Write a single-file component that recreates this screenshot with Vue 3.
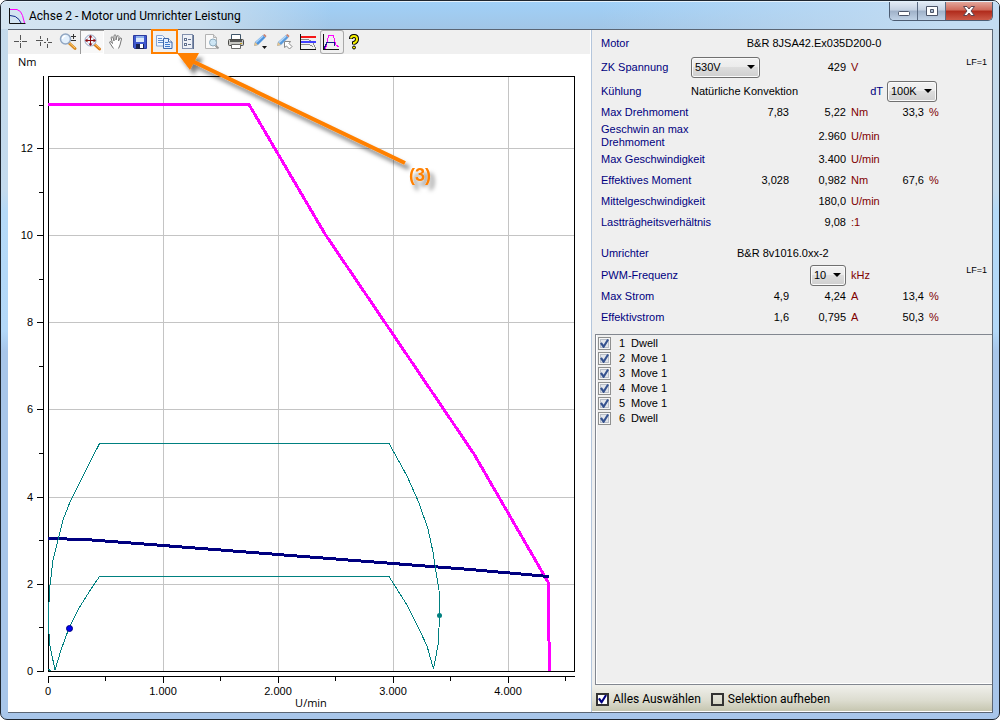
<script setup>
import { ref } from 'vue'

const voltage = ref('530V')
const delta = ref('100K')
const pwm = ref('10')

const motorRows = [
  { label: 'Max Drehmoment', limit: '7,83', value: '5,22', unit: 'Nm', pct: '33,3' },
  { label: 'Geschwin an max Drehmoment', value: '2.960', unit: 'U/min', tall: true },
  { label: 'Max Geschwindigkeit', value: '3.400', unit: 'U/min' },
  { label: 'Effektives Moment', limit: '3,028', value: '0,982', unit: 'Nm', pct: '67,6' },
  { label: 'Mittelgeschwindigkeit', value: '180,0', unit: 'U/min' },
  { label: 'Lastträgheitsverhältnis', value: '9,08', unit: ':1' },
]
const driveRows = [
  { label: 'Max Strom', limit: '4,9', value: '4,24', unit: 'A', pct: '13,4' },
  { label: 'Effektivstrom', limit: '1,6', value: '0,795', unit: 'A', pct: '50,3' },
]
const steps = ref(
  ['Dwell', 'Move 1', 'Move 1', 'Move 1', 'Move 1', 'Dwell'].map((name, i) => ({ no: i + 1, name, on: true }))
)
const all = ref(true)
const none = ref(false)

const yTicks = [
  { v: '0', y: 671 }, { v: '2', y: 584 }, { v: '4', y: 497 }, { v: '6', y: 409 },
  { v: '8', y: 322 }, { v: '10', y: 235 }, { v: '12', y: 148 },
]
const yMinor = [105, 192, 279, 366, 453, 540, 627]
const xTicks = [
  { v: '0', x: 48 }, { v: '1.000', x: 163 }, { v: '2.000', x: 278 }, { v: '3.000', x: 393 }, { v: '4.000', x: 508 },
]
const xMinor = [105, 220, 335, 450, 565]
</script>

<template>
  <div class="window">
    <header class="titlebar">
      <svg class="app-icon" width="18" height="18" viewBox="0 0 18 18" fill="none">
        <path d="M1.500 1v15.500h16" stroke="#111" />
        <path d="M2 2.500h7q4 1 5.500 6l2 7.500" stroke="#f0f" />
        <path d="M2 8.500q6 0 9 4l2 3.500" stroke="#112a8c" />
      </svg>
      <h1>Achse 2 - Motor und Umrichter Leistung</h1>
      <div class="controls">
        <button type="button" class="ctl" aria-label="Minimieren">
          <svg width="14" height="12" viewBox="0 0 14 12"><rect x="1.500" y="6.500" width="11" height="4" rx="1" fill="#fff" stroke="#4b5468" /></svg>
        </button>
        <button type="button" class="ctl" aria-label="Maximieren">
          <svg width="14" height="12" viewBox="0 0 14 12"><path fill-rule="evenodd" d="M1.500 1.500h11v9h-11zM5.500 4.500v3h3v-3z" fill="#fff" stroke="#4b5468" /></svg>
        </button>
        <button type="button" class="ctl close" aria-label="Schließen">
          <svg width="14" height="12" viewBox="0 0 14 12"><path d="M1.500 1.500h3.500l2 2.500 2-2.500h3.500L9 6l3.500 4.500H9L7 8l-2 2.500H1.500L5 6z" fill="#fff" stroke="#5c4450" /></svg>
        </button>
      </div>
    </header>

    <main class="client">
      <section class="plot-pane">
        <div class="toolbar" role="toolbar">
          <button type="button" class="tool" aria-label="Fadenkreuz">
            <svg viewBox="0 0 24 24" stroke="#555" shape-rendering="crispEdges"><path d="M6 11.500h5M14 11.500h5M12.500 5v5M12.500 13v5M12 11.500h1" /></svg>
          </button>
          <button type="button" class="tool" aria-label="Doppeltes Fadenkreuz">
            <svg viewBox="0 0 24 24" stroke="#555" shape-rendering="crispEdges"><path d="M4 10.500h7M8.500 6v3M8.500 12v4M12 12.500h2M16 12.500h4M15.500 8v3M15.500 14v4" /></svg>
          </button>
          <button type="button" class="tool" aria-label="Zoom">
            <svg viewBox="0 0 24 24">
              <path d="M13 13l6 5.500" stroke="#d88a22" stroke-width="3" stroke-linecap="round" /><path d="M13 12.500l6 5.500" stroke="#ffcf70" />
              <circle cx="9.500" cy="9" r="5" fill="#e3f0fd" stroke="#91a6c2" stroke-width="1.500" /><path d="M6.500 9a3 3 0 0 1 3-3" stroke="#fff" stroke-width="1.500" fill="none" />
              <path d="M15 6.500h5M17.500 4v5M15 10.500h5" stroke="#333" shape-rendering="crispEdges" />
            </svg>
          </button>
          <button type="button" class="tool pressed" aria-label="Zoom zurücksetzen">
            <svg viewBox="0 0 24 24">
              <path d="M14 14l5.500 5" stroke="#d87818" stroke-width="3" stroke-linecap="round" /><path d="M14 13.500l6 5" stroke="#ffc45c" />
              <circle cx="10.500" cy="10.500" r="5.500" fill="#eef4fc" stroke="#8e9fbd" />
              <path d="M6 10.500h9M10.500 6v9" stroke="#8b0d12" />
              <path d="M5 10.500l2.500-2v4zM16 10.500l-2.500-2v4zM10.500 5l-2 2.500h4zM10.500 16l-2-2.500h4z" fill="#8b0d12" />
            </svg>
          </button>
          <button type="button" class="tool" aria-label="Verschieben">
            <svg viewBox="0 0 24 24" fill="#fff" stroke="#777"><path d="M9.500 18.500l-4-6q0-2 2 0l1 1-1.500-6q1-1.500 2 0l1 3.500V5.500q1-1.500 2 0V10l1-4q1.500-1 2 .500L14.500 11l1.500-3q1.500-.500 1.500 1l-1.500 6-1.500 3.500" /></svg>
          </button>
          <button type="button" class="tool" aria-label="Speichern">
            <svg viewBox="0 0 24 24">
              <path d="M5.500 5.500h13v13h-12l-1-1z" fill="#3f59cf" stroke="#2b3b9e" />
              <rect x="8" y="6" width="8" height="6" fill="#dbe9fa" /><rect x="8" y="6" width="8" height="2" fill="#8fb1ee" />
              <rect x="8" y="14" width="8" height="5" fill="#1a2350" /><rect x="12" y="14" width="3" height="4" fill="#fff" />
            </svg>
          </button>
          <button type="button" class="tool" aria-label="Kopieren">
            <svg viewBox="0 0 24 24">
              <path d="M4.500 5.500h6l3 3v7.500h-9z" fill="#eef5ff" stroke="#89a6d4" /><path d="M6 8.500h4M6 10.500h5M6 12.500h5" stroke="#5f8bcc" />
              <path d="M11.500 8.500h5l3.500 3.500v6.500h-8.500z" fill="#e3efff" stroke="#3f67a9" /><path d="M16.500 8.500V12H20" fill="#fff" stroke="#3f67a9" /><path d="M13 12.500h3M13 14.500h5M13 16.500h5" stroke="#3f78cb" />
            </svg>
          </button>
          <button type="button" class="tool" aria-label="Eigenschaften">
            <svg viewBox="0 0 24 24">
              <rect x="15" y="5" width="3" height="14" fill="#5e6f90" /><rect x="6.500" y="4.500" width="10" height="14" fill="#eef1f7" stroke="#8391ad" />
              <path d="M8 8h3v3H8zM8 13h3v3H8z" fill="#60708e" /><path d="M9 9h1v1H9zM9 14h1v1H9z" fill="#fff" /><path d="M12 9.500h3M12 14.500h3" stroke="#60708e" />
            </svg>
          </button>
          <button type="button" class="tool" aria-label="Seitenansicht">
            <svg viewBox="0 0 24 24">
              <path d="M5.500 4.500h8l3 3v11h-11z" fill="#f9f9f9" stroke="#b3b3b3" /><path d="M13.500 4.500v3h3" fill="#ddd" stroke="#b3b3b3" />
              <path d="M15.500 15.500l3 3" stroke="#9a9a9a" stroke-width="2" /><circle cx="13" cy="12.500" r="3.500" fill="#cde5f4" stroke="#8caabd" />
            </svg>
          </button>
          <button type="button" class="tool" aria-label="Drucken">
            <svg viewBox="0 0 24 24">
              <path d="M7.500 10V4.500h9V10" fill="#fff" stroke="#41576b" /><rect x="4.500" y="9.500" width="15" height="6" rx="1" fill="#c8c8c4" stroke="#4a4a48" />
              <rect x="6" y="10" width="12" height="2" fill="#555" /><path d="M7.500 14.500h9v4h-9z" fill="#fff" stroke="#666" /><rect x="16" y="13" width="2" height="1" fill="#c9a227" />
            </svg>
          </button>
          <button type="button" class="tool" aria-label="Stift">
            <svg viewBox="0 0 24 24">
              <path d="M6 16l1-4 8-7 2.500 2.500-7.500 7.500z" fill="#4d93dc" /><path d="M8 12.500l7-6.500" stroke="#a9d2fa" stroke-width="1.500" /><path d="M6 16l1-4 3 3z" fill="#e9c48c" /><path d="M15 5l2.500 2.500 1-1.500-2-2z" fill="#c98270" />
              <path d="M14 16h5l-2.500 3z" fill="#111" />
            </svg>
          </button>
          <button type="button" class="tool" aria-label="Auswahlstift">
            <svg viewBox="0 0 24 24">
              <path d="M5 16l1-4 8-7 2.500 2.500L9 15z" fill="#5b9bdd" /><path d="M7 12.500L14 6" stroke="#b7daf9" stroke-width="1.500" /><path d="M5 16l1-4 3 3z" fill="#e9c48c" /><path d="M14 5l2.500 2.500 1-1.500-2-2z" fill="#c98270" />
              <path d="M12.500 11.500h6l-1.500 2 3 3-2.500 2.500-3-3-2 1.500z" fill="#fff" stroke="#888" />
            </svg>
          </button>
          <button type="button" class="tool" aria-label="Grenzwerte">
            <svg viewBox="0 0 24 24" shape-rendering="crispEdges" fill="none">
              <path d="M4.500 4v15.500H20" stroke="#111" /><path d="M5 9.500h7l5 3 3 6.500M5 14.500h8l4 2" stroke="#888" /><path d="M5 7h15" stroke="#f51818" stroke-width="2" /><path d="M5 12h15" stroke="#4040ff" stroke-width="2" />
            </svg>
          </button>
          <button type="button" class="tool framed" aria-label="Kennlinie">
            <svg viewBox="0 0 24 24" shape-rendering="crispEdges" fill="none">
              <path d="M3.500 4v15.500H19" stroke="#111" /><path d="M5.500 19l3-13.500h5l2 9 3.500 2.500" stroke="#f0f" /><path d="M4 18.500l3-6h7l1 3" stroke="#141c8f" />
            </svg>
          </button>
          <button type="button" class="tool" aria-label="Hilfe">
            <svg viewBox="0 0 24 24" fill="none">
              <path d="M7 9Q7 6 10 6t3 3-3 4v1.500" stroke="#000" stroke-width="4" /><path d="M7 8.500Q7 6 10 6t3 3-3 4v1" stroke="#f6f000" stroke-width="2" />
              <circle cx="10" cy="17.500" r="1.500" fill="#f6f000" stroke="#000" />
            </svg>
          </button>
        </div>

        <svg class="chart" viewBox="8 54 582 658" role="img" aria-label="Drehmoment über Drehzahl">
          <g shape-rendering="crispEdges" fill="none">
            <g stroke="#c4c4c4">
              <path v-for="t in yTicks.slice(1)" :key="'gy' + t.v" :d="`M48 ${t.y + 0.5}H574`" />
              <path v-for="t in xTicks.slice(1)" :key="'gx' + t.v" :d="`M${t.x + 0.5} 77V671`" />
            </g>
            <g stroke="#000">
              <rect x="48.500" y="76.500" width="526" height="595" />
              <path d="M43.500 76V672M48 676.500H575" />
              <path v-for="t in yTicks" :key="'ty' + t.v" :d="`M37 ${t.y + 0.5}H43`" />
              <path v-for="y in yMinor" :key="'my' + y" :d="`M39 ${y + 0.5}H43`" />
              <path v-for="t in xTicks" :key="'tx' + t.v" :d="`M${t.x + 0.5} 677V683`" />
              <path v-for="x in xMinor" :key="'mx' + x" :d="`M${x + 0.5} 677V681`" />
            </g>
            <path stroke="#f0f" stroke-width="3" d="M48 104.500H249L325 234L386 324L474 454L548 582L548.500 610L549.500 671" />
            <path stroke="#000080" stroke-width="3" d="M48 538.500L85 539.500L163 545.500L278 554.500L393 563.500L470 569.500L549 576.500" />
            <path
              stroke="#008080"
              d="M48.500 602V628M49 602L50 585L53 560L58 540L63 520L70 502L79 484L99.500 443.500H389L407 476L419 503L428 529L433 552L436 572L439 590L439.500 615L439 628L438 645L433.500 669L427 646L420 631L407 605L389 576.500H99.500L91 589L79 608L69 628L61 650L55 670L50 646L48.500 628M48 669L51 671"
            />
          </g>
          <circle cx="69.500" cy="628.500" r="3" fill="#0000f0" stroke="#000080" />
          <circle cx="439.500" cy="615.500" r="2.500" fill="#008080" />
          <g class="ticks">
            <text v-for="t in yTicks" :key="'ly' + t.v" x="33" :y="t.y + 4" text-anchor="end">{{ t.v }}</text>
            <text v-for="t in xTicks" :key="'lx' + t.v" :x="t.x" y="695" text-anchor="middle">{{ t.v }}</text>
          </g>
          <g class="names">
            <text x="18" y="66">Nm</text>
            <text x="311" y="707" text-anchor="middle">U/min</text>
          </g>
        </svg>
      </section>

      <section class="data-pane">
        <table>
          <colgroup><col class="c1" /><col class="c2" /><col class="c3" /><col class="c4" /><col class="c5" /><col class="c6" /><col /></colgroup>
          <tbody>
            <tr>
              <th scope="row">Motor</th>
              <td colspan="5" class="motor-name">B&amp;R 8JSA42.Ex035D200-0</td>
              <td></td>
            </tr>
            <tr class="combo">
              <th scope="row"><label for="volt">ZK Spannung</label></th>
              <td>
                <span class="drop"><select id="volt" v-model="voltage" class="w-volt"><option>530V</option></select></span>
              </td>
              <td class="num">429</td>
              <td class="unit">V</td>
              <td></td><td></td>
              <td class="lf">LF=1</td>
            </tr>
            <tr class="mid">
              <th scope="row">Kühlung</th>
              <td colspan="2">Natürliche Konvektion</td>
              <td class="dt"><label for="dt">dT</label></td>
              <td colspan="3">
                <span class="drop"><select id="dt" v-model="delta" class="w-dt"><option>100K</option></select></span>
              </td>
            </tr>
            <tr v-for="r in motorRows" :key="r.label" :class="{ tall: r.tall }">
              <th scope="row" :class="{ wrap: r.tall }">{{ r.label }}</th>
              <td class="num">{{ r.limit }}</td>
              <td class="num">{{ r.value }}</td>
              <td class="unit">{{ r.unit }}</td>
              <td class="num">{{ r.pct }}</td>
              <td class="unit">{{ r.pct ? '%' : '' }}</td>
              <td></td>
            </tr>
          </tbody>
          <tbody class="drive">
            <tr class="name">
              <th scope="row">Umrichter</th>
              <td colspan="2" class="drive-name">B&amp;R 8v1016.0xx-2</td>
              <td colspan="4"></td>
            </tr>
            <tr class="mid">
              <th scope="row"><label for="pwm">PWM-Frequenz</label></th>
              <td></td>
              <td class="num">
                <span class="drop"><select id="pwm" v-model="pwm" class="w-pwm"><option>10</option></select></span>
              </td>
              <td class="unit">kHz</td>
              <td></td><td></td>
              <td class="lf">LF=1</td>
            </tr>
            <tr v-for="r in driveRows" :key="r.label">
              <th scope="row">{{ r.label }}</th>
              <td class="num">{{ r.limit }}</td>
              <td class="num">{{ r.value }}</td>
              <td class="unit">{{ r.unit }}</td>
              <td class="num">{{ r.pct }}</td>
              <td class="unit">%</td>
              <td></td>
            </tr>
          </tbody>
        </table>

        <ul class="steps">
          <li v-for="s in steps" :key="s.no">
            <label><input v-model="s.on" type="checkbox" /><span class="no">{{ s.no }}</span><span>{{ s.name }}</span></label>
          </li>
        </ul>

        <footer class="bar">
          <label><input v-model="all" type="checkbox" />Alles Auswählen</label>
          <label><input v-model="none" type="checkbox" />Selektion aufheben</label>
        </footer>
      </section>
    </main>

    <svg class="callout" width="450" height="200" viewBox="0 0 450 200">
      <defs>
        <filter id="soft" x="-20%" y="-20%" width="140%" height="140%">
          <feDropShadow dx="4" dy="5" stdDeviation="2" flood-color="#000" flood-opacity="0.5" />
        </filter>
      </defs>
      <rect x="152" y="30" width="25" height="23" fill="none" stroke="#ff8000" stroke-width="2" />
      <g filter="url(#soft)">
        <path d="M192 61L405 163" stroke="#ff8000" stroke-width="4" />
        <path d="M177 53L199 53L190 70Z" fill="#ff8000" />
        <text x="409" y="181">(3)</text>
      </g>
    </svg>
  </div>
</template>

<style>
body {
  background: #fff;
}
</style>

<style scoped>
* {
  box-sizing: border-box;
}
.window {
  position: relative;
  display: flex;
  flex-direction: column;
  min-height: 100vh;
  padding: 0 6px 6px 7px;
  border: 1px solid #1e2630;
  border-radius: 7px;
  background: linear-gradient(#c4d9ea 0, #c4dbee 190px, #b5daf8 210px, #b3d8f8 330px, #a8c6ea 350px, #a8c6ea);
  font: 11px/13px "Liberation Sans", Arial, sans-serif;
  color: #000;
}
.titlebar {
  display: flex;
  align-items: center;
  height: 28px;
  margin: 0 -6px 0 -7px;
  padding: 0 6px 0 7px;
  border-top: 1px solid #e4f1fb;
  border-radius: 6px 6px 0 0;
  background:
    linear-gradient(90deg, #d4e5f2 0, #c6dcee 200px, transparent 330px),
    linear-gradient(90deg, transparent 60%, #c3dcf2 95%),
    linear-gradient(#a0d0f8, #a2c6e6);
}
.app-icon {
  margin-right: 3px;
}
h1 {
  flex: 1;
  margin: 0;
  font: 12px/16px Roboto, "Open Sans", sans-serif;
}
.controls {
  display: flex;
  align-self: flex-start;
  border: 1px solid #4c5c72;
  border-top: 0;
  border-radius: 0 0 5px 5px;
  overflow: hidden;
}
.ctl {
  display: grid;
  place-items: center;
  width: 28px;
  height: 18px;
  padding: 0;
  border: 0;
  border-right: 1px solid #5a6b82;
  background: linear-gradient(#e2ebf5, #c4d1e2 45%, #9fb1c8 50%, #c0d2e6);
}
.ctl.close {
  width: 46px;
  border-right: 0;
  background: linear-gradient(#e3a69b, #cf6a5a 45%, #b02a1b 50%, #cc5a48);
}
.client {
  display: grid;
  flex: 1;
  grid-template-columns: minmax(0, 584fr) minmax(0, 400fr);
  border: 1px solid #5b6674;
  border-left: 0;
  background: #efefef;
}
.plot-pane {
  padding-right: 1px;
  background: #fff;
  border-right: 1px solid #b4c6dc;
}
.toolbar {
  display: flex;
  height: 24px;
  background: #f0f0f0;
}
.tool {
  width: 24px;
  height: 24px;
  padding: 0;
  border: 0;
  background: none;
}
.tool svg {
  display: block;
  width: 24px;
  height: 24px;
}
.pressed {
  background: #f8f8f8;
  box-shadow: inset 1px 1px #9a9a9a, inset -1px -1px #fff;
}
.framed {
  border-radius: 3px;
  box-shadow: inset 0 0 0 1px #aaa;
}
.chart {
  display: block;
  width: 100%;
  height: auto;
}
.ticks {
  font: 11px "Liberation Sans", Arial, sans-serif;
}
.names {
  font: 11px "Open Sans", "Noto Sans", sans-serif;
}
.data-pane {
  display: flex;
  flex-direction: column;
  min-width: 0;
}
table {
  width: calc(100% - 14px);
  margin: 3px 5px 6px 9px;
  border-collapse: collapse;
  table-layout: fixed;
}
.c1 { width: 90px; }
.c2 { width: 98px; }
.c3 { width: 57px; }
.c4 { width: 41px; }
.c5 { width: 37px; }
.c6 { width: 30px; }
tr {
  height: 21px;
}
.mid {
  height: 22px;
}
.tall,
.combo {
  height: 26px;
}
th,
td {
  padding: 0;
  white-space: nowrap;
  font-weight: 400;
  text-align: left;
}
th,
.dt {
  color: #000080;
}
.wrap {
  white-space: normal;
}
.motor-name {
  padding-right: 17px;
  text-align: center;
}
.num {
  text-align: right;
}
.unit {
  padding-left: 5px;
  color: #800000;
}
.dt {
  padding-right: 4px;
  text-align: right;
}
.lf {
  vertical-align: top;
  font-size: 9px;
  text-align: right;
}
.combo .lf {
  padding-top: 2px;
}
.drive .name {
  height: 31px;
}
.drive .name > * {
  padding-top: 10px;
}
.drive .drive-name {
  padding-left: 46px;
}
.drop {
  position: relative;
  display: inline-block;
  vertical-align: middle;
}
.drop::after {
  content: "";
  position: absolute;
  top: 8px;
  right: 5px;
  border: 4px solid transparent;
  border-top-color: #000;
  border-bottom: 0;
  pointer-events: none;
}
select {
  appearance: none;
  display: block;
  height: 21px;
  padding: 0 3px;
  border: 1px solid #707070;
  border-radius: 3px;
  background: linear-gradient(#f2f2f2, #ebebeb 50%, #dddddd 50%, #cfcfcf);
  box-shadow: inset 0 0 0 1px #fafafa;
  font: inherit;
  color: #000;
}
.w-volt { width: 69px; }
.w-dt { width: 50px; }
.w-pwm { width: 36px; }
.steps {
  flex: 1;
  margin: 0 0 0 3px;
  padding: 1px 0 0 2px;
  border: 1px solid #828790;
  border-right: 0;
  box-shadow: inset 1px -1px #fff;
  list-style: none;
}
.steps li {
  height: 15px;
}
.steps label,
.bar label {
  display: flex;
  align-items: center;
}
.steps label {
  height: 15px;
}
.no {
  width: 12px;
}
input {
  appearance: none;
  display: grid;
  place-items: center;
  width: 13px;
  height: 13px;
  margin: 0;
  border: 1px solid #8e8f8f;
  background: #e2e5ea;
  box-shadow: inset 0 0 0 1px #f6f6f6, inset 0 0 0 2px #b8bec8;
}
.steps input {
  margin-right: 8px;
}
input:checked::after {
  content: "";
  width: 9px;
  height: 9px;
  background: #35528f;
  clip-path: polygon(0 50%, 20% 35%, 40% 65%, 80% 0, 100% 10%, 45% 100%, 35% 100%);
}
.bar {
  display: flex;
  align-items: center;
  gap: 10px;
  height: 27px;
  padding: 2px 4px 0;
  border-bottom: 1px solid #fff;
  background: linear-gradient(#f0f0ec, #dcdccf 60%, #c6c6b0);
  font: 12px/16px Roboto, "Open Sans", sans-serif;
}
.bar input {
  margin-right: 4px;
  border: 2px solid #333;
  background: transparent;
  box-shadow: none;
}
.bar input:checked {
  background: #fff;
}
.bar input:checked::after {
  background: #000080;
}
.callout {
  position: absolute;
  top: -1px;
  left: -1px;
  pointer-events: none;
}
.callout text {
  font: bold 18px "Liberation Sans", Arial, sans-serif;
  fill: #ff8000;
}
</style>
